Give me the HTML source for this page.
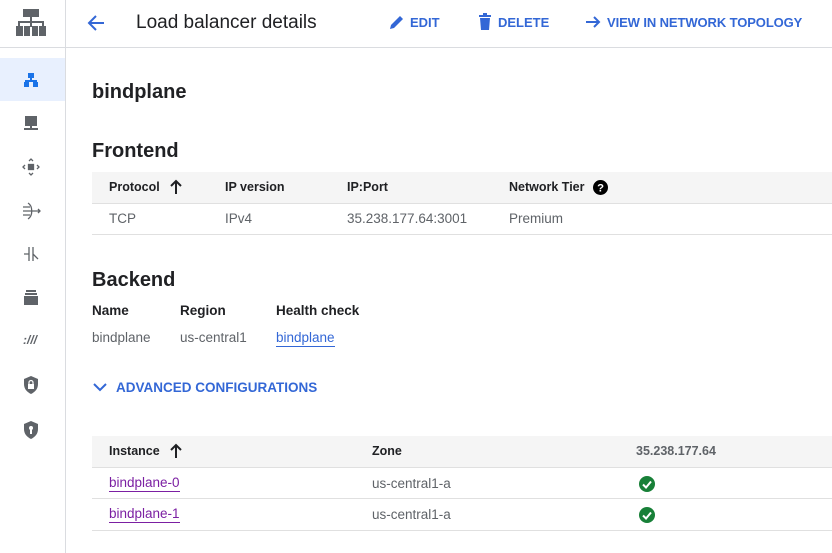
<!DOCTYPE html>
<html><head><meta charset="utf-8">
<style>
*{margin:0;padding:0;box-sizing:border-box}
body{width:832px;height:553px;overflow:hidden;background:#fff;font-family:"Liberation Sans",Arial,sans-serif;color:#202124;position:relative}
.a{position:absolute;white-space:nowrap}
.side{position:absolute;left:0;top:0;width:66px;height:553px;border-right:1px solid #dadce0}
.ic{position:absolute;left:22px}
.blue{color:#3367d6}
.th{font-size:12.5px;font-weight:bold;color:#202124}
.td{font-size:13.5px;color:#5f6368}
.line{position:absolute;height:1px;background:#e0e0e0}
.hdr{position:absolute;background:#f5f5f5}
</style></head><body>
<div class="side">
  <div style="position:absolute;left:0;top:47px;width:65px;height:1px;background:#dadce0"></div>
  <div style="position:absolute;left:0;top:58px;width:65px;height:43px;background:#e8f0fe"></div>
  <svg class="ic" style="left:15px;top:9px" width="32" height="28" viewBox="0 0 32 28" fill="#5f6368">
    <rect x="8" y="0" width="16" height="8"/><rect x="15" y="8" width="2" height="5"/>
    <rect x="3" y="12" width="26" height="2"/><rect x="3" y="12" width="2" height="6"/><rect x="27" y="12" width="2" height="6"/><rect x="15" y="12" width="2" height="6"/>
    <rect x="1" y="17" width="7" height="10"/><rect x="9" y="17" width="6" height="10"/><rect x="17" y="17" width="6" height="10"/><rect x="24" y="17" width="7" height="10"/>
  </svg>
  <svg class="ic" style="top:71px" width="18" height="18" viewBox="0 0 18 18" fill="#1a73e8">
    <rect x="6" y="2" width="6" height="5"/><rect x="8" y="7" width="2" height="3"/><rect x="3" y="9" width="12" height="2"/><rect x="2" y="11" width="5" height="5"/><rect x="11" y="11" width="5" height="5"/>
  </svg>
  <svg class="ic" style="top:114px" width="18" height="18" viewBox="0 0 18 18" fill="#5f6368">
    <rect x="3" y="2" width="12" height="10"/><rect x="8" y="12" width="2" height="2"/><rect x="2" y="14" width="14" height="2"/>
  </svg>
  <svg class="ic" style="top:158px" width="18" height="18" viewBox="0 0 18 18" fill="none" stroke="#5f6368" stroke-width="1.3">
    <rect x="6.5" y="6.5" width="5" height="5" fill="#5f6368"/><path d="M7 3l2-2 2 2M7 15l2 2 2-2M3 7l-2 2 2 2M15 7l2 2-2 2"/>
  </svg>
  <svg class="ic" style="top:202px" width="20" height="18" viewBox="0 0 20 18" fill="none" stroke="#5f6368" stroke-width="1.3">
    <path d="M6 1c5 3 5 13 0 16M1 5h7M1 9h12M1 13h7M13 9h5M16 7l2 2-2 2"/>
  </svg>
  <svg class="ic" style="top:245px" width="18" height="18" viewBox="0 0 18 18" fill="none" stroke="#5f6368" stroke-width="1.3">
    <path d="M7 2v14M11 2v14M2 9h5M11 9l5 5"/>
  </svg>
  <svg class="ic" style="top:289px" width="18" height="18" viewBox="0 0 18 18" fill="#5f6368">
    <rect x="4" y="1" width="10" height="2"/><rect x="3" y="4" width="12" height="2"/><rect x="2" y="7" width="14" height="9"/>
  </svg>
  <div class="a" style="left:23px;top:333px;font-size:12px;font-weight:bold;font-style:italic;color:#5f6368">:///</div>
  <svg class="ic" style="top:375px" width="18" height="20" viewBox="0 0 18 20" fill="#5f6368">
    <path d="M9 1L2 4v5c0 5 3 8 7 10 4-2 7-5 7-10V4z"/><rect x="6" y="9" width="6" height="5" fill="#fff"/><path d="M7 9V7.5a2 2 0 014 0V9" stroke="#fff" fill="none" stroke-width="1.2"/>
  </svg>
  <svg class="ic" style="top:420px" width="18" height="20" viewBox="0 0 18 20" fill="#5f6368">
    <path d="M9 1L2 4v5c0 5 3 8 7 10 4-2 7-5 7-10V4z"/><circle cx="9" cy="8" r="2" fill="#fff"/><rect x="8" y="9" width="2" height="5" fill="#fff"/>
  </svg>
</div>
<div style="position:absolute;left:66px;top:47px;width:766px;height:1px;background:#dadce0"></div>
<svg class="a" style="left:86px;top:13px" width="20" height="20" viewBox="0 0 20 20"><path d="M18 10H3M10 3l-7 7 7 7" stroke="#3367d6" stroke-width="2" fill="none"/></svg>
<div class="a" style="left:136px;top:12px;font-size:19px;color:#202124">Load balancer details</div>
<svg class="a" style="left:389px;top:14px" width="16" height="16" viewBox="0 0 16 16" fill="#3367d6"><path d="M1 15l1-4 9-9 3 3-9 9z"/></svg>
<div class="a blue" style="left:410px;top:15px;font-size:13px;font-weight:bold">EDIT</div>
<svg class="a" style="left:478px;top:13px" width="14" height="18" viewBox="0 0 14 18" fill="#3367d6"><rect x="1" y="2" width="12" height="2"/><rect x="5" y="0" width="4" height="2"/><path d="M2 5h10l-1 12H3z"/></svg>
<div class="a blue" style="left:498px;top:15px;font-size:13px;font-weight:bold">DELETE</div>
<svg class="a" style="left:585px;top:14px" width="16" height="16" viewBox="0 0 16 16"><path d="M1 8h13M9 3l5 5-5 5" stroke="#3367d6" stroke-width="2" fill="none"/></svg>
<div class="a blue" style="left:607px;top:15px;font-size:13px;font-weight:bold;letter-spacing:-0.1px">VIEW IN NETWORK TOPOLOGY</div>

<div class="a" style="left:92px;top:81px;font-size:20px;font-weight:bold">bindplane</div>
<div class="a" style="left:92px;top:140px;font-size:20px;font-weight:bold">Frontend</div>
<div class="hdr" style="left:92px;top:172px;width:740px;height:31px"></div>
<div class="line" style="left:92px;top:203px;width:740px"></div>
<div class="line" style="left:92px;top:234px;width:740px"></div>
<div class="a th" style="left:109px;top:180px">Protocol</div>
<svg class="a" style="left:169px;top:179px" width="14" height="16" viewBox="0 0 14 16"><path d="M7 15V2M2 7l5-5 5 5" stroke="#202124" stroke-width="2" fill="none"/></svg>
<div class="a th" style="left:225px;top:180px">IP version</div>
<div class="a th" style="left:347px;top:180px">IP:Port</div>
<div class="a th" style="left:509px;top:180px">Network Tier</div>
<svg class="a" style="left:593px;top:180px" width="15" height="15" viewBox="0 0 16 16"><circle cx="8" cy="8" r="8" fill="#000"/><text x="8" y="12.5" font-size="12" font-weight="bold" fill="#fff" text-anchor="middle" font-family="Liberation Sans">?</text></svg>
<div class="a td" style="left:109px;top:211px">TCP</div>
<div class="a td" style="left:225px;top:211px">IPv4</div>
<div class="a td" style="left:347px;top:211px">35.238.177.64:3001</div>
<div class="a td" style="left:509px;top:211px">Premium</div>

<div class="a" style="left:92px;top:269px;font-size:20px;font-weight:bold">Backend</div>
<div class="a" style="left:92px;top:303px;font-size:13.5px;font-weight:bold">Name</div>
<div class="a" style="left:180px;top:303px;font-size:13.5px;font-weight:bold">Region</div>
<div class="a" style="left:276px;top:303px;font-size:13.5px;font-weight:bold">Health check</div>
<div class="a td" style="left:92px;top:330px">bindplane</div>
<div class="a td" style="left:180px;top:330px">us-central1</div>
<div class="a" style="left:276px;top:330px;font-size:13.5px;color:#3367d6;border-bottom:1px solid #3367d6;padding-bottom:1px">bindplane</div>

<svg class="a" style="left:93px;top:381px" width="14" height="12" viewBox="0 0 14 12"><path d="M1 3l6 6 6-6" stroke="#3367d6" stroke-width="2" fill="none"/></svg>
<div class="a blue" style="left:116px;top:380px;font-size:13.5px;font-weight:bold">ADVANCED CONFIGURATIONS</div>

<div class="hdr" style="left:92px;top:436px;width:740px;height:31px"></div>
<div class="line" style="left:92px;top:467px;width:740px"></div>
<div class="line" style="left:92px;top:498px;width:740px"></div>
<div class="line" style="left:92px;top:530px;width:740px"></div>
<div class="a th" style="left:109px;top:444px">Instance</div>
<svg class="a" style="left:169px;top:443px" width="14" height="16" viewBox="0 0 14 16"><path d="M7 15V2M2 7l5-5 5 5" stroke="#202124" stroke-width="2" fill="none"/></svg>
<div class="a th" style="left:372px;top:444px">Zone</div>
<div class="a th" style="left:636px;top:444px;color:#5f6368">35.238.177.64</div>
<div class="a" style="left:109px;top:475px;font-size:13.5px;color:#7b1fa2;border-bottom:1px solid #7b1fa2;padding-bottom:1px">bindplane-0</div>
<div class="a td" style="left:372px;top:476px">us-central1-a</div>
<div class="a" style="left:109px;top:506px;font-size:13.5px;color:#7b1fa2;border-bottom:1px solid #7b1fa2;padding-bottom:1px">bindplane-1</div>
<div class="a td" style="left:372px;top:507px">us-central1-a</div>
<svg class="a" style="left:639px;top:476px" width="16" height="16" viewBox="0 0 16 16"><circle cx="8" cy="8" r="8" fill="#188038"/><path d="M4 8.5l3 3 5-6" stroke="#fff" stroke-width="2" fill="none"/></svg>
<svg class="a" style="left:639px;top:507px" width="16" height="16" viewBox="0 0 16 16"><circle cx="8" cy="8" r="8" fill="#188038"/><path d="M4 8.5l3 3 5-6" stroke="#fff" stroke-width="2" fill="none"/></svg>
</body></html>
